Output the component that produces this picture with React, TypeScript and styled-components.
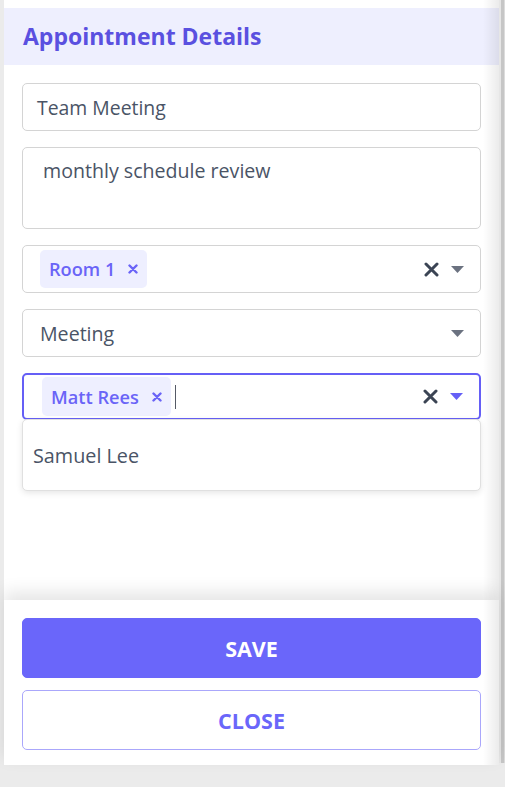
import React from "react";
import styled, { createGlobalStyle } from "styled-components";

const Global = createGlobalStyle`
  html, body { margin: 0; padding: 0; background: #ebebeb; }
  body { font-family: "Open Sans", "Noto Sans", "Liberation Sans", sans-serif; }
  * { box-sizing: border-box; }
`;

const Page = styled.div`
  display: flex;
  height: 787px;
  overflow: hidden;
`;

const Panel = styled.div`
  position: relative;
  width: 495px;
  height: 765px;
  margin-left: 4px;
  background: #ffffff;
  display: flex;
  flex-direction: column;
  padding-top: 8px;
  &::after {
    content: "";
    position: absolute;
    top: 0;
    right: 0;
    bottom: 0;
    width: 16px;
    pointer-events: none;
    background: linear-gradient(to right, rgba(0, 0, 0, 0), rgba(0, 0, 0, 0.08));
    z-index: 3;
  }
`;

const Scrollbar = styled.div`
  width: 6px;
  height: 763px;
  background: linear-gradient(to right, #e6e6e6 0 2px, #c6c6c6 2px 5px, #dcdcdc 5px);
`;

const Header = styled.div`
  height: 57px;
  background: #eeeffe;
  display: flex;
  align-items: center;
  padding-left: 19px;
`;

const Title = styled.h2`
  margin: 0;
  font-size: 23px;
  font-weight: 700;
  color: #5a50e0;
  margin-top: -2px;
`;

const Form = styled.div`
  display: flex;
  flex-direction: column;
  gap: 16px;
  padding: 18px 18px 0 18px;
`;

const TextInput = styled.div`
  height: 48px;
  border: 1px solid #d4d4d4;
  border-radius: 5px;
  display: flex;
  align-items: center;
  padding-left: 14px;
  font-size: 19.4px;
  color: #4a5466;
`;

const TextArea = styled.div`
  height: 82px;
  border: 1px solid #d4d4d4;
  border-radius: 5px;
  padding: 9px 0 0 20px;
  font-size: 19.6px;
  color: #4a5466;
`;

const Select = styled.div<{ $focused?: boolean }>`
  position: relative;
  height: ${(p) => (p.$focused ? "47px" : "48px")};
  border: ${(p) => (p.$focused ? "2px solid #655ff6" : "1px solid #d4d4d4")};
  border-radius: 5px;
  display: flex;
  align-items: center;
  padding-left: ${(p) => (p.$focused ? "18px" : "17px")};
  padding-right: 16px;
  font-size: 19.6px;
  color: #4a5466;
`;

const Value = styled.div`
  flex: 1;
  display: flex;
  align-items: center;
  gap: 4px;
`;

const Chip = styled.span<{ $h: number }>`
  display: inline-flex;
  align-items: center;
  height: ${(p) => p.$h}px;
  padding: 0 9px;
  gap: 13px;
  background: #eeefff;
  border-radius: 5px;
  color: #6a64f7;
  font-size: 18.2px;
  font-weight: 600;
`;

const Caret = styled.span`
  width: 1px;
  height: 24px;
  background: #555a66;
`;

const Indicators = styled.div`
  display: flex;
  align-items: center;
  gap: 12px;
`;

const Menu = styled.div`
  position: absolute;
  top: calc(100% + 1px);
  left: -2px;
  right: -2px;
  height: 72px;
  background: #ffffff;
  border: 1px solid #e0e0e0;
  border-radius: 5px;
  box-shadow: 0 2px 6px rgba(0, 0, 0, 0.1);
  display: flex;
  align-items: center;
  padding-left: 10px;
  font-size: 19.8px;
  color: #4a5466;
  z-index: 2;
`;

const Footer = styled.div`
  margin-top: auto;
  height: 165px;
  background: #ffffff;
  box-shadow: 0 -8px 16px rgba(0, 0, 0, 0.1);
  display: flex;
  flex-direction: column;
  gap: 12px;
  padding: 18px 18px 0 18px;
  position: relative;
`;

const Button = styled.button<{ $primary?: boolean }>`
  height: 60px;
  width: 100%;
  border-radius: 5px;
  border: 1px solid ${(p) => (p.$primary ? "#6a66fa" : "#aaa7fb")};
  background: ${(p) => (p.$primary ? "#6a66fa" : "#ffffff")};
  color: ${(p) => (p.$primary ? "#ffffff" : "#6a66fa")};
  font-family: "Open Sans", "Noto Sans", sans-serif;
  font-size: 21.5px;
  font-weight: 700;
  cursor: pointer;
`;

const SmallX = ({ color }: { color: string }) => (
  <svg width="10" height="10" viewBox="0 0 10 10">
    <path d="M1.5 1.5 L8.5 8.5 M8.5 1.5 L1.5 8.5" stroke={color} strokeWidth="2.4" strokeLinecap="round" />
  </svg>
);

const ClearX = () => (
  <svg width="15" height="15" viewBox="0 0 15 15">
    <path d="M2 2 L13 13 M13 2 L2 13" stroke="#3b4454" strokeWidth="3" strokeLinecap="round" />
  </svg>
);

const Arrow = ({ color }: { color: string }) => (
  <svg width="13" height="7" viewBox="0 0 13 7">
    <path d="M0 0 H13 L6.5 7 Z" fill={color} />
  </svg>
);

export default function App() {
  return (
    <Page>
      <Global />
      <Panel>
        <Header>
          <Title>Appointment Details</Title>
        </Header>
        <Form>
          <TextInput>Team Meeting</TextInput>
          <TextArea>monthly schedule review</TextArea>
          <Select>
            <Value>
              <Chip $h={38}>
                Room 1
                <SmallX color="#6a64f7" />
              </Chip>
            </Value>
            <Indicators>
              <ClearX />
              <Arrow color="#6b7280" />
            </Indicators>
          </Select>
          <Select>
            <Value>Meeting</Value>
            <Indicators>
              <Arrow color="#6b7280" />
            </Indicators>
          </Select>
          <Select $focused>
            <Value>
              <Chip $h={39}>
                Matt Rees
                <SmallX color="#6a64f7" />
              </Chip>
              <Caret />
            </Value>
            <Indicators>
              <ClearX />
              <Arrow color="#655ff6" />
            </Indicators>
            <Menu>Samuel Lee</Menu>
          </Select>
        </Form>
        <Footer>
          <Button $primary>SAVE</Button>
          <Button>CLOSE</Button>
        </Footer>
      </Panel>
      <Scrollbar />
    </Page>
  );
}
